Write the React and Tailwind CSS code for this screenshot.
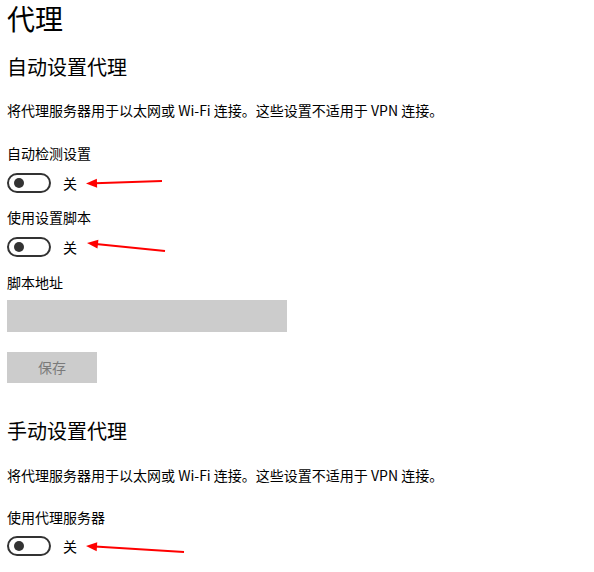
import React from "react";

function Toggle() {
  return (
    <div className="flex items-center h-[20px]">
      <div className="w-[44px] h-[20px] rounded-full border-2 border-[#333333] flex items-center pl-[5px] box-border">
        <div className="w-[10px] h-[10px] rounded-full bg-[#333333]" />
      </div>
      <span className="ml-[12px] text-[14px] leading-[20px] text-black">关</span>
    </div>
  );
}

function Arrow({ x1, y1, x2, y2 }) {
  // x1,y1 tail; x2,y2 tip
  const dx = x2 - x1;
  const dy = y2 - y1;
  const len = Math.sqrt(dx * dx + dy * dy);
  const ux = dx / len;
  const uy = dy / len;
  const hl = 11;
  const hw = 4.5;
  const bx = x2 - ux * hl;
  const by = y2 - uy * hl;
  const px = -uy;
  const py = ux;
  const pts = `${x2},${y2} ${bx + px * hw},${by + py * hw} ${bx - px * hw},${by - py * hw}`;
  return (
    <g>
      <line x1={x1} y1={y1} x2={bx + ux * 2} y2={by + uy * 2} stroke="#ff0000" strokeWidth="2" />
      <polygon points={pts} fill="#ff0000" />
    </g>
  );
}

export default function App() {
  return (
    <div className="relative w-[594px] h-[572px] bg-white overflow-hidden font-['Noto_Sans_CJK_SC','Noto_Sans',sans-serif] text-black">
      <div className="flex flex-col items-start pl-[7px]">
        <h1 className="text-[28px] leading-[36px] font-normal">代理</h1>
        <h2 className="mt-[17px] text-[20px] leading-[28px] font-normal">自动设置代理</h2>
        <p className="mt-[19px] text-[14px] leading-[20px]">将代理服务器用于以太网或 Wi-Fi 连接。这些设置不适用于 VPN 连接。</p>
        <div className="mt-[23px] text-[14px] leading-[20px]">自动检测设置</div>
        <div className="mt-[10px]"><Toggle /></div>
        <div className="mt-[14px] text-[14px] leading-[20px]">使用设置脚本</div>
        <div className="mt-[10px]"><Toggle /></div>
        <div className="mt-[15px] text-[14px] leading-[20px]">脚本地址</div>
        <div className="mt-[8px] w-[280px] h-[32px] bg-[#cccccc]" />
        <div className="mt-[20px] w-[90px] h-[31px] bg-[#cccccc] flex items-center justify-center text-[14px] text-[#7a7a7a]">保存</div>
        <h2 className="mt-[34px] text-[20px] leading-[28px] font-normal">手动设置代理</h2>
        <p className="mt-[20px] text-[14px] leading-[20px]">将代理服务器用于以太网或 Wi-Fi 连接。这些设置不适用于 VPN 连接。</p>
        <div className="mt-[22px] text-[14px] leading-[20px]">使用代理服务器</div>
        <div className="mt-[9px]"><Toggle /></div>
      </div>
      <svg className="absolute left-0 top-0 pointer-events-none" width="594" height="572">
        <Arrow x1={162} y1={181} x2={86} y2={183.5} />
        <Arrow x1={165} y1={251} x2={87} y2={243} />
        <Arrow x1={184} y1={552} x2={86} y2={546} />
      </svg>
    </div>
  );
}
